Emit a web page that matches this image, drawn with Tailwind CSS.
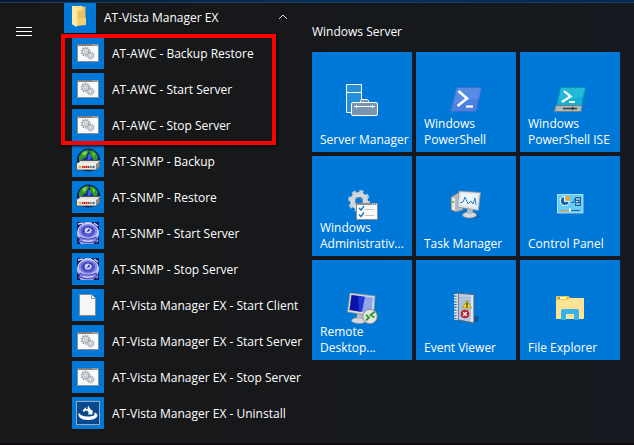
<!DOCTYPE html>
<html lang="en">
<head>
    <meta charset="UTF-8">
    <meta name="viewport" content="width=device-width, initial-scale=1.0">
    <title>Start</title>
    <script src="https://cdn.jsdelivr.net/npm/@tailwindcss/browser@4"></script>
</head>
<body class="min-h-screen flex flex-col bg-linear-to-r from-[#181818] via-[#16181b] to-[#161a20] font-['Open_Sans','Noto_Sans',sans-serif] text-xs text-white">

    <!-- Shared icons -->
    <svg class="hidden">
        <symbol id="gear" viewBox="-6 -6 12 12">
            <circle r="4.8" fill="none" stroke="#8b98a5" stroke-width="1.2" stroke-dasharray="1.5 1.5"/>
            <circle r="3.7" fill="#e3e7ea" stroke="#8b98a5" stroke-width=".9"/>
            <circle r="1.6" fill="#fff" stroke="#8b98a5" stroke-width=".8"/>
        </symbol>
        <symbol id="batch" viewBox="0 0 32 32">
            <rect x="5.5" y="7.5" width="21" height="17" fill="#fafafa" stroke="#8e8e8e"/>
            <path d="M5 8h22" stroke="#7f7f7f" stroke-width="2"/>
            <path d="M20.5 8h1M22.5 8h1M24.5 8h1" stroke="#e6e6e6"/>
            <use href="#gear" x="8" y="9" width="11" height="11"/>
            <use href="#gear" x="14" y="14" width="9" height="9"/>
        </symbol>
        <symbol id="snmp-db" viewBox="0 0 32 32">
            <circle cx="16.500" cy="15" r="11" fill="#1a2a98" stroke="#06103c"/>
            <path d="M7 11l4-5 5-1.500 1 2-2 3-1 3-3 1-2 3-2-1zM18 5l4 1 4 5-1 4-3 1-2-4-2-1z" fill="#2f9a1e"/>
            <path d="M10 8l4-2 1 2-3 3zM20 7l3 2-1 3z" fill="#7fd84a"/>
            <path d="M17 9l2 4-3 2zM23 13l2-2" fill="#3c68f0" stroke="#3c68f0" stroke-width=".7"/>
            <path d="M4.500 19l4-3.500h19v6l-4 3.500h-19z" fill="#e2e2d8" stroke="#3a3a38" stroke-width=".7"/>
            <path d="M5 19h18.500l4-3.300" fill="none" stroke="#fff"/>
            <path d="M24 19l3.500-3v5.500l-3.500 3z" fill="#8d8d86"/>
            <path d="M7 22h2" stroke="#e8b400" stroke-width="2"/>
            <path d="M10 22h7" stroke="#e0142c" stroke-width="2" stroke-dasharray="1.500 .5"/>
            <path d="M17.500 22h2" stroke="#25ad3b" stroke-width="2"/>
            <path d="M20.500 22h2" stroke="#555bb0" stroke-width="2"/>
        </symbol>
        <symbol id="snmp-server" viewBox="0 0 32 32">
            <rect x="5" y="5" width="22" height="22" fill="#aab2f5"/>
            <path d="M5 5h8l-5 4-3 6zM19 5h8v9l-4-5zM5 19l5 6-2 2h-3zM27 18v9h-6l4-4z" fill="#171a5c"/>
            <path d="M6 7l5-1M22 6l4 3M7 24l3 2M24 25l2-2" stroke="#d5d9ff" stroke-width="1.500"/>
            <ellipse cx="16" cy="14" rx="10" ry="7.500" fill="#8688ea" stroke="#dfe1ff"/>
            <ellipse cx="16" cy="14" rx="7" ry="5.500" fill="#5453c8"/>
            <path d="M11 15q0-5 6-5 3 0 4 2-4-1-6 1-1 3-4 2z" fill="#2a2790"/>
            <ellipse cx="16" cy="13.500" rx="3.500" ry="3" fill="#c9d4ff"/>
            <path d="M14.500 15l3-4v3z" fill="#1d1d90"/>
            <path d="M8 20q8 4 16 0l1 4q-9 4-18 0z" fill="#7d80e6" stroke="#2b2b8a" stroke-width=".7"/>
            <path d="M11 23.500q5 1.500 10 0" stroke="#e3e6ff" fill="none"/>
        </symbol>
        <symbol id="file" viewBox="0 0 32 32">
            <path d="M7.500 5.500h12l4 4v17h-16z" fill="#f7f7f7" stroke="#8c8c8c"/>
            <path d="M19.500 5.500v4h4" fill="#fff" stroke="#8c8c8c"/>
        </symbol>
        <symbol id="uninstall" viewBox="0 0 32 32">
            <rect x="4.500" y="4.500" width="23" height="23" fill="#07498c" stroke="#9aa6b2"/>
            <path d="M7 15.500c-2 4 2 7.500 9 7.500 6 0 9.500-2.500 9.500-4.800 0-1.400-1.500-2.400-4-2.700 2.500 1.500 1 4-5 4-5 0-9-1.500-9.500-4z" fill="#fff"/>
            <path d="M10.500 13.500l3.500-3.500v2h1.500l.5-3.500 3 4.500 1.500 0v4.500h-5l1.500-1.500-2-2.500-2.500.5v1.500z" fill="#fff"/>
        </symbol>
    </svg>

    <!-- Strip of the desktop above the menu -->
    <div class="h-[3px] shrink-0 bg-linear-to-r from-[#061a31] via-[#07305c] to-[#062a55] border-b border-[#203c58]"></div>

    <main class="flex flex-1">
        <nav class="w-16 shrink-0 pl-4 pt-5">
            <button type="button" aria-label="Menu" class="block">
                <svg class="size-4" viewBox="0 0 16 16"><path d="M0 4.500h16M0 8.500h16M0 12.500h16" stroke="#fff"/></svg>
            </button>
        </nav>

        <!-- App list -->
        <section class="w-62 shrink-0">
            <button type="button" aria-expanded="true" class="flex items-center w-full h-8 pr-[23px] text-left">
                <span class="w-8 h-[30px] self-start shrink-0 bg-[#0078d7]">
                    <svg class="w-8 h-[30px]" viewBox="0 0 32 30">
                        <path d="M13 4.500l8.500-1v18.500l-8.500 1z" fill="#e9c562"/>
                        <path d="M13 15h9v7h-9z" fill="#f1cf72"/>
                        <path d="M8 3h10.500v4l-5 1v14.500l-1 1.500-4.500-3z" fill="#ffe08e"/>
                        <path d="M8 3l4 2v18.500l-4-2.500z" fill="#ffe9ac"/>
                    </svg>
                </span>
                <span class="flex-1 pl-2 pb-0.5">AT-Vista Manager EX</span>
                <svg class="w-3 h-8" viewBox="0 0 12 32"><path d="M2 16l4-4 4 4" fill="none" stroke="#ddd"/></svg>
            </button>

            <ul class="relative pl-2">
                <li><a href="#" class="flex items-center gap-2 h-9"><svg class="size-8 bg-[#0078d7]"><use href="#batch"/></svg><span class="pt-0.5">AT-AWC - Backup Restore</span></a></li>
                <li><a href="#" class="flex items-center gap-2 h-9"><svg class="size-8 bg-[#0078d7]"><use href="#batch"/></svg><span class="pt-0.5">AT-AWC - Start Server</span></a></li>
                <li><a href="#" class="flex items-center gap-2 h-9"><svg class="size-8 bg-[#0078d7]"><use href="#batch"/></svg><span class="pt-0.5">AT-AWC - Stop Server</span></a></li>
                <!-- Highlight round the AWC entries -->
                <li aria-hidden="true" class="absolute -left-[3px] right-9 -top-px -bottom-0.5 border-4 border-[#fe0000] shadow-[1px_1px_3px_#000] pointer-events-none"></li>
            </ul>
            <ul class="pl-2">
                <li><a href="#" class="flex items-center gap-2 h-9"><svg class="size-8 bg-[#0078d7]"><use href="#snmp-db"/></svg><span class="pt-0.5">AT-SNMP - Backup</span></a></li>
                <li><a href="#" class="flex items-center gap-2 h-9"><svg class="size-8 bg-[#0078d7]"><use href="#snmp-db"/></svg><span class="pt-0.5">AT-SNMP - Restore</span></a></li>
                <li><a href="#" class="flex items-center gap-2 h-9"><svg class="size-8 bg-[#0078d7]"><use href="#snmp-server"/></svg><span class="pt-0.5">AT-SNMP - Start Server</span></a></li>
                <li><a href="#" class="flex items-center gap-2 h-9"><svg class="size-8 bg-[#0078d7]"><use href="#snmp-server"/></svg><span class="pt-0.5">AT-SNMP - Stop Server</span></a></li>
                <li><a href="#" class="flex items-center gap-2 h-9"><svg class="size-8 bg-[#0078d7]"><use href="#file"/></svg><span class="pt-0.5">AT-Vista Manager EX - Start Client</span></a></li>
                <li><a href="#" class="flex items-center gap-2 h-9"><svg class="size-8 bg-[#0078d7]"><use href="#batch"/></svg><span class="pt-0.5">AT-Vista Manager EX - Start Server</span></a></li>
                <li><a href="#" class="flex items-center gap-2 h-9"><svg class="size-8 bg-[#0078d7]"><use href="#batch"/></svg><span class="pt-0.5">AT-Vista Manager EX - Stop Server</span></a></li>
                <li><a href="#" class="flex items-center gap-2 h-9"><svg class="size-8 bg-[#0078d7]"><use href="#uninstall"/></svg><span class="pt-0.5">AT-Vista Manager EX - Uninstall</span></a></li>
            </ul>
        </section>

        <!-- Pinned tiles -->
        <section class="pt-[21px]">
            <h2 class="h-7">Windows Server</h2>
            <div class="grid grid-cols-[repeat(3,100px)] auto-rows-[100px] gap-1 whitespace-nowrap">
                <a href="#" class="flex flex-col justify-between bg-[#0078d7] pt-8 px-2 pb-1">
                    <svg class="size-8 self-center" viewBox="0 0 32 32">
                        <path d="M.5.500h15v28h-15z" fill="#2490dc" stroke="#fff"/>
                        <path d="M.5 8.500h15" stroke="#fff"/>
                        <path d="M5 32V20l2-2h9v14z" fill="#0078d7"/>
                        <path d="M14.500 18.500v-2l1-1h6l1 1v2" fill="#7994b1" stroke="#fff"/>
                        <rect x="5.500" y="18.500" width="26" height="13" rx="1.500" fill="#7994b1" stroke="#fff"/>
                        <path d="M8 22.500h21M10.500 21v3M26.500 21v3" stroke="#fff"/>
                    </svg>
                    <span>Server Manager</span>
                </a>
                <a href="#" class="flex flex-col justify-between bg-[#0078d7] pt-8 px-2 pb-1">
                    <svg class="size-8 self-center" viewBox="0 0 32 32">
                        <path d="M6.500 3.500h25l-5.500 24H.5z" fill="#4a80e0" stroke="#3a6fd0"/>
                        <path d="M7 4h24l-2 10L4 20z" fill="#6a9cf0" opacity=".4"/>
                        <path d="M8.500 7l8.500 7.500L7.500 22" fill="none" stroke="#fff" stroke-width="2.600"/>
                        <path d="M16 22.500h7" stroke="#fff" stroke-width="2.200"/>
                    </svg>
                    <span>Windows<br>PowerShell</span>
                </a>
                <a href="#" class="flex flex-col justify-between bg-[#0078d7] pt-8 px-2 pb-1">
                    <svg class="size-8 self-center" viewBox="0 0 32 32">
                        <path d="M6.500 3.500h25l-4 18H2.500z" fill="#15b0d3" stroke="#0b93b8"/>
                        <path d="M7 4h24l-2 8-24 6z" fill="#3cc8e2" opacity=".4"/>
                        <path d="M2 21.500h26l-1 6H.5z" fill="#a9b9bd" stroke="#6e8086"/>
                        <path d="M9 24.500h14" stroke="#343f44" stroke-width="1.500"/>
                        <path d="M18 22.500l3 2-3 2z" fill="#343f44"/>
                        <path d="M10 7l6.500 5.500L8 18" fill="none" stroke="#fff" stroke-width="2.200"/>
                        <path d="M15 18h6" stroke="#fff" stroke-width="2"/>
                    </svg>
                    <span>Windows<br>PowerShell ISE</span>
                </a>

                <a href="#" class="flex flex-col justify-between bg-[#0078d7] pt-8 px-2 pb-1">
                    <svg class="size-8 self-center" viewBox="0 0 32 32">
                        <circle cx="13" cy="13" r="9.500" fill="none" stroke="#c3cbd3" stroke-width="3" stroke-dasharray="4 3.460"/>
                        <circle cx="13" cy="13" r="6.500" fill="none" stroke="#d3d8dd" stroke-width="5"/>
                        <circle cx="13" cy="13" r="3.500" fill="#0078d7" stroke="#7e8f9f"/>
                        <rect x="10.500" y="15.500" width="21" height="16" fill="#fafafa" stroke="#8d8d8d"/>
                        <path d="M10 16h22" stroke="#8d8d8d" stroke-width="2"/>
                        <path d="M26 16h1M28 16h1M30 16h1" stroke="#eee"/>
                        <path d="M13 20l2 2 3-4M13 26.500l2 2 3-4" fill="none" stroke="#2481cc" stroke-width="1.500"/>
                        <path d="M19 21.500h9M19 27.500h9" stroke="#c4c4c4"/>
                    </svg>
                    <span>Windows<br>Administrativ...</span>
                </a>
                <a href="#" class="flex flex-col justify-between bg-[#0078d7] pt-8 px-2 pb-1">
                    <svg class="size-8 self-center" viewBox="0 0 32 32">
                        <path d="M1 9l7-4 5 2v15l-7 2-5-2z" fill="#b8bcc0" stroke="#74797e" stroke-width=".7"/>
                        <path d="M2 9.500l3 1v12l-3-1z" fill="#e6e8ea"/>
                        <path d="M2 13h2v2H2z" fill="#3fd43c"/>
                        <ellipse cx="22" cy="28" rx="8" ry="3" fill="#1e5c99" opacity=".6"/>
                        <ellipse cx="19.500" cy="27" rx="7" ry="3" fill="#d9dcdf" stroke="#8a9096" stroke-width=".6"/>
                        <path d="M17 21h6l-.5 5h-5z" fill="#b7bcc1"/>
                        <path d="M9 3l21.500 1.500-2 18L7.500 19z" fill="#dedfe0" stroke="#8c9196" stroke-width=".7"/>
                        <path d="M11 5l17 1.300-1.600 13.500L9.700 17z" fill="#eef7fd"/>
                        <path d="M10 15l3-1 2-5 3 7 3-3 2 3 2-6 1 7" fill="none" stroke="#2b7fc4"/>
                    </svg>
                    <span>Task Manager</span>
                </a>
                <a href="#" class="flex flex-col justify-between bg-[#0078d7] pt-8 px-2 pb-1">
                    <svg class="size-8 self-center" viewBox="0 0 32 32">
                        <rect x="3" y="6" width="27" height="20" fill="#0d5ca0"/>
                        <rect x="3.500" y="6.500" width="25.500" height="18.500" fill="#69cdf8" stroke="#a5e3fc"/>
                        <path d="M10.500 8.500a4.500 4.500 0 1 0 4.800 4.800h-4.800z" fill="#1568b0" stroke="#fff"/>
                        <path d="M11.500 7.500a5 5 0 0 1 4.500 5h-4.500z" fill="#fca41c"/>
                        <path d="M17 14.500h3v-3h2" fill="none" stroke="#1568b0"/>
                        <rect x="21" y="9" width="6" height="9" fill="#1568b0"/>
                        <path d="M22 11h4M22 13.500h2M22 16h4" stroke="#fff"/>
                        <path d="M25 13.500h1" stroke="#fca41c"/>
                        <path d="M6 22.500h10" stroke="#f19a1b"/>
                        <path d="M16 22.500h10" stroke="#1568b0"/>
                        <path d="M15 20.500h2v3h-2z" fill="#fff"/>
                    </svg>
                    <span>Control Panel</span>
                </a>

                <a href="#" class="flex flex-col justify-between bg-[#0078d7] pt-8 px-2 pb-1">
                    <svg class="size-8 self-center" viewBox="0 0 32 32">
                        <ellipse cx="13" cy="28.500" rx="7.500" ry="3" fill="#d5d9dc" stroke="#8d949a" stroke-width=".6"/>
                        <path d="M11 21h6v6h-6z" fill="#b5babf"/>
                        <path d="M4 1l25 3-1.500 20L1.500 20z" fill="#dcdcd8" stroke="#8c9196" stroke-width=".7"/>
                        <path d="M5.500 3l21.500 2.500-1.500 16L3.500 18z" fill="#8fa6ee"/>
                        <path d="M5.500 3l10 1.200-1 15.500L3.500 18z" fill="#0a12a8"/>
                        <path d="M12 4l7 .8-3 15-3-.4z" fill="#2338d0"/>
                        <circle cx="24" cy="24.500" r="7.200" fill="#e4e4e2" stroke="#8b8f92"/>
                        <path d="M20 23l3 2.500-3 3M28.500 20l-4 3 4 2.500" fill="none" stroke="#2f9a2c" stroke-width="1.800"/>
                    </svg>
                    <span>Remote<br>Desktop...</span>
                </a>
                <a href="#" class="flex flex-col justify-between bg-[#0078d7] pt-8 px-2 pb-1">
                    <svg class="size-8 self-center" viewBox="0 0 32 32">
                        <path d="M24 24l5 1-1 4-4 2z" fill="#07559f"/>
                        <path d="M6 1l18 1.500v28.500L6 27.500z" fill="#b8cbe2" stroke="#5d6670"/>
                        <path d="M22 3v27" stroke="#e9f1f8" stroke-width="1.500"/>
                        <path d="M9 6h12M9 9h12M9 12h12M9 15h12M9 18h12M9 21h12M9 24h12" stroke="#8eabd0" stroke-width=".8"/>
                        <path d="M6 2v26" stroke="#e4e4e4" stroke-width="4" stroke-dasharray="1.600 1.200"/>
                        <path d="M8.500 2v26" stroke="#626a72" stroke-width=".8"/>
                        <path d="M17 8l4.500 8h-9z" fill="#f8dc26" stroke="#9b860c" stroke-width=".7"/>
                        <path d="M17 10.500v3M17 14v1.200" stroke="#222" stroke-width="1.400"/>
                        <circle cx="15" cy="22" r="4" fill="#cf2330" stroke="#941620" stroke-width=".6"/>
                        <path d="M13.300 20.300l3.400 3.400M16.700 20.300l-3.400 3.400" stroke="#fff" stroke-width="1.300"/>
                    </svg>
                    <span>Event Viewer</span>
                </a>
                <a href="#" class="flex flex-col justify-between bg-[#0078d7] pt-8 px-2 pb-1">
                    <svg class="size-8 self-center" viewBox="0 0 32 32">
                        <path d="M2 5q0-1 1-1h11l2 2h13q1 0 1 1v19q0 1-1 1H3q-1 0-1-1z" fill="#ffe394"/>
                        <path d="M2 5q0-1 1-1h11l1.500 2-1.500 2H2z" fill="#fdc62f"/>
                        <path d="M6 6h6" stroke="#fff" stroke-width="2"/>
                        <path d="M4 6h2" stroke="#4da9dc" stroke-width="2"/>
                        <path d="M7 28v-9q0-2 2-2h14q2 0 2 2v9h-5v-6h-8v6z" fill="#37b1ea"/>
                    </svg>
                    <span>File Explorer</span>
                </a>
            </div>
        </section>
    </main>
    <div class="h-0.5 bg-[#120a10]"></div>
</body>
</html>
